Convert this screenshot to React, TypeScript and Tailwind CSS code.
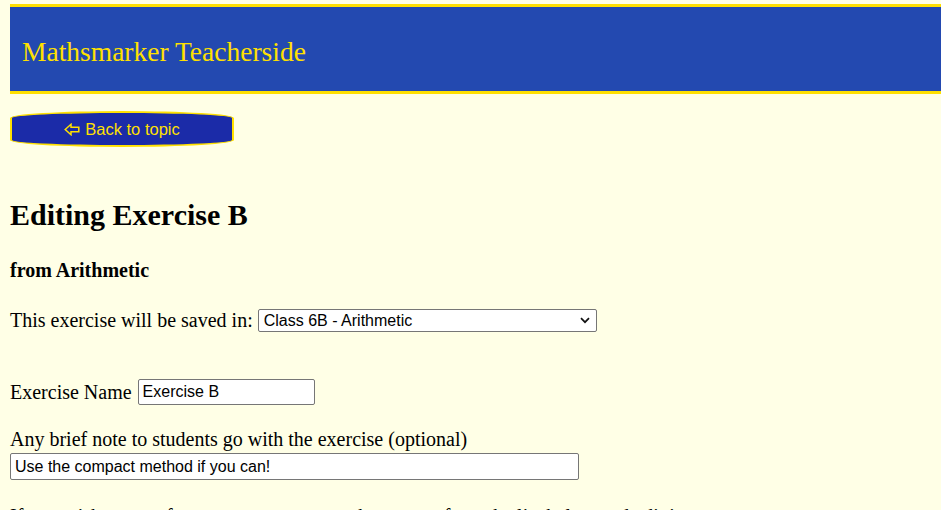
import React from "react";

export default function App() {
  return (
    <div className="min-h-screen bg-[#FFFFE6] pl-[10px] pt-[4px] text-black [font-family:'Liberation_Serif',serif]">
      <header className="h-[90px] border-y-[3px] border-[#FFE000] bg-[#2349B0] pl-[12px] pt-[29px] text-[27.5px] leading-[31px] text-[#FFE000]">
        Mathsmarker Teacherside
      </header>

      <button
        type="button"
        className="mt-[17px] flex h-[36px] w-[224px] items-center justify-center rounded-[112px/7px] border-2 border-[#FFE000] bg-[#1B2BA8] text-[16.5px] text-[#FFE000] [font-family:'Liberation_Sans',Arial,sans-serif]"
      >
        <svg className="mr-[5px]" width="16" height="13" viewBox="0 0 16 13" fill="none">
          <path
            d="M1.2 6.5 L7 1.3 L7 4.2 L14.8 4.2 L14.8 8.8 L7 8.8 L7 11.7 Z"
            stroke="#FFE000"
            strokeWidth="1.5"
            strokeLinejoin="miter"
          />
        </svg>
        <span>Back to topic</span>
      </button>

      <h1 className="mt-[50px] text-[30px] font-bold leading-[35px]">Editing Exercise B</h1>

      <h3 className="mt-[27px] text-[20px] font-bold leading-[23px]">from Arithmetic</h3>

      <div className="mt-[27px] flex items-start text-[20px] leading-[23px]">
        <span>This exercise will be saved in:</span>
        <span className="relative ml-[5px] inline-flex h-[23px] w-[339px] items-center rounded-[2px] border border-[#767676] bg-white pl-[5px] text-[16px] [font-family:'Liberation_Sans',Arial,sans-serif]">
          Class 6B - Arithmetic
          <svg
            className="absolute right-[6px] top-[7px]"
            width="10"
            height="7"
            viewBox="0 0 10 7"
            fill="none"
          >
            <path d="M1 1.2 L5 5.2 L9 1.2" stroke="#111" strokeWidth="1.7" />
          </svg>
        </span>
      </div>

      <div className="mt-[47px] flex items-start text-[20px] leading-[23px]">
        <span className="mt-[2px]">Exercise Name</span>
        <input
          readOnly
          defaultValue="Exercise B"
          className="ml-[6px] h-[26px] w-[177px] rounded-[2px] border border-[#767676] bg-white px-[4px] text-[16px] outline-none [font-family:'Liberation_Sans',Arial,sans-serif]"
        />
      </div>

      <div className="mt-[23px] text-[20px] leading-[23px]">
        Any brief note to students go with the exercise (optional)
      </div>
      <input
        readOnly
        defaultValue="Use the compact method if you can!"
        className="mt-[2px] block h-[27px] w-[569px] rounded-[2px] border border-[#767676] bg-white px-[4px] text-[16px] outline-none [font-family:'Liberation_Sans',Arial,sans-serif]"
      />

      <p className="mt-[25px] text-[20px] leading-[23px]">
        If you wish to start from a preset, you can choose one from the list below and edit it.
      </p>
    </div>
  );
}
